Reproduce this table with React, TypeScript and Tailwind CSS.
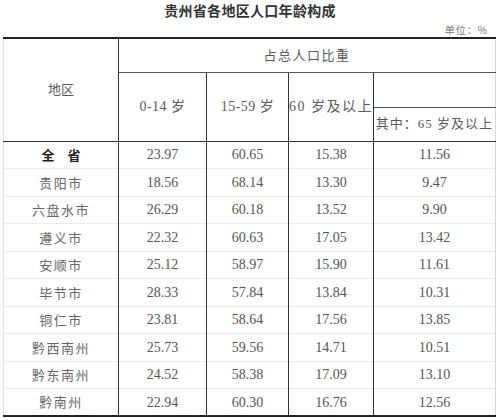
import React from "react";

const rows: [string, string, string, string, string][] = [
  ["全　省", "23.97", "60.65", "15.38", "11.56"],
  ["贵阳市", "18.56", "68.14", "13.30", "9.47"],
  ["六盘水市", "26.29", "60.18", "13.52", "9.90"],
  ["遵义市", "22.32", "60.63", "17.05", "13.42"],
  ["安顺市", "25.12", "58.97", "15.90", "11.61"],
  ["毕节市", "28.33", "57.84", "13.84", "10.31"],
  ["铜仁市", "23.81", "58.64", "17.56", "13.85"],
  ["黔西南州", "25.73", "59.56", "14.71", "10.51"],
  ["黔东南州", "24.52", "58.38", "17.09", "13.10"],
  ["黔南州", "22.94", "60.30", "16.76", "12.56"],
];

export default function App() {
  const font = { fontFamily: '"Liberation Serif", "Noto Sans CJK SC", serif' };
  return (
    <div className="w-[500px] h-[420px] bg-white overflow-hidden">
      <div
        className="h-[21px] flex items-center justify-center text-[14px] font-bold text-[#333] tracking-[0.3px]"
        style={{ fontFamily: '"Noto Sans CJK SC", sans-serif' }}
      >
        贵州省各地区人口年龄构成
      </div>
      <div
        className="h-[16px] flex items-center justify-end pr-[12px] text-[10px] text-[#777] tracking-[1px]"
        style={{ fontFamily: '"Noto Sans CJK SC", sans-serif' }}
      >
        单位：%
      </div>
      <div className="pl-[3px]">
        <table
          className="table-fixed border-collapse text-[#555]"
          style={font}
        >
          <colgroup>
            <col className="w-[115px]" />
            <col className="w-[88px]" />
            <col className="w-[82px]" />
            <col className="w-[85px]" />
            <col className="w-[122px]" />
          </colgroup>
          <thead className="text-[#5a5a5a]">
            <tr className="h-[34px] border-t-2 border-t-[#222]">
              <td
                rowSpan={3}
                className="text-center align-middle text-[13px] border-l border-l-[#e2e2e2] border-r border-r-[#333] border-b border-b-[#333]"
              >
                地区
              </td>
              <td
                colSpan={4}
                className="text-center align-middle text-[13px] tracking-[1.5px] border-b border-b-[#555] border-r border-r-[#d8d8d8]"
              >
                占总人口比重
              </td>
            </tr>
            <tr className="h-[35px]">
              <td rowSpan={2} className="text-center align-middle text-[14px] tracking-[0.5px] border-r border-r-[#333] border-b border-b-[#333]">
                0-14 岁
              </td>
              <td rowSpan={2} className="text-center align-middle text-[14px] tracking-[0.5px] border-r border-r-[#333] border-b border-b-[#333]">
                15-59 岁
              </td>
              <td rowSpan={2} className="text-center align-middle text-[14px] tracking-[1.5px] whitespace-nowrap border-r border-r-[#333] border-b border-b-[#333]">
                60 岁及以上
              </td>
              <td className="border-b border-b-[#555] border-r border-r-[#d8d8d8]"></td>
            </tr>
            <tr className="h-[34px]">
              <td className="text-center align-middle text-[13px] tracking-[1px] whitespace-nowrap border-b border-b-[#333] border-r border-r-[#d8d8d8]">
                其中：65 岁及以上
              </td>
            </tr>
          </thead>
          <tbody>
            {rows.map((r, i) => (
              <tr
                key={i}
                className={
                  i === rows.length - 1
                    ? "h-[27.5px] border-b-2 border-b-[#222]"
                    : "h-[27.5px] border-b border-b-[#ececec]"
                }
              >
                <td
                  className={
                    i === 0
                      ? "text-center align-middle text-[13px] font-bold text-[#222] border-l border-l-[#e2e2e2] border-r border-r-[#333]"
                      : "text-center align-middle text-[13px] tracking-[1.5px] text-[#666] border-l border-l-[#e2e2e2] border-r border-r-[#333]"
                  }
                  style={{ fontFamily: '"Noto Sans CJK SC", sans-serif' }}
                >
                  {r[0]}
                </td>
                <td className="text-center align-middle text-[14px] border-r border-r-[#333]">{r[1]}</td>
                <td className="text-center align-middle text-[14px] border-r border-r-[#333]">{r[2]}</td>
                <td className="text-center align-middle text-[14px] border-r border-r-[#333]">{r[3]}</td>
                <td className="text-center align-middle text-[14px] border-r border-r-[#d8d8d8]">{r[4]}</td>
              </tr>
            ))}
          </tbody>
        </table>
      </div>
    </div>
  );
}
